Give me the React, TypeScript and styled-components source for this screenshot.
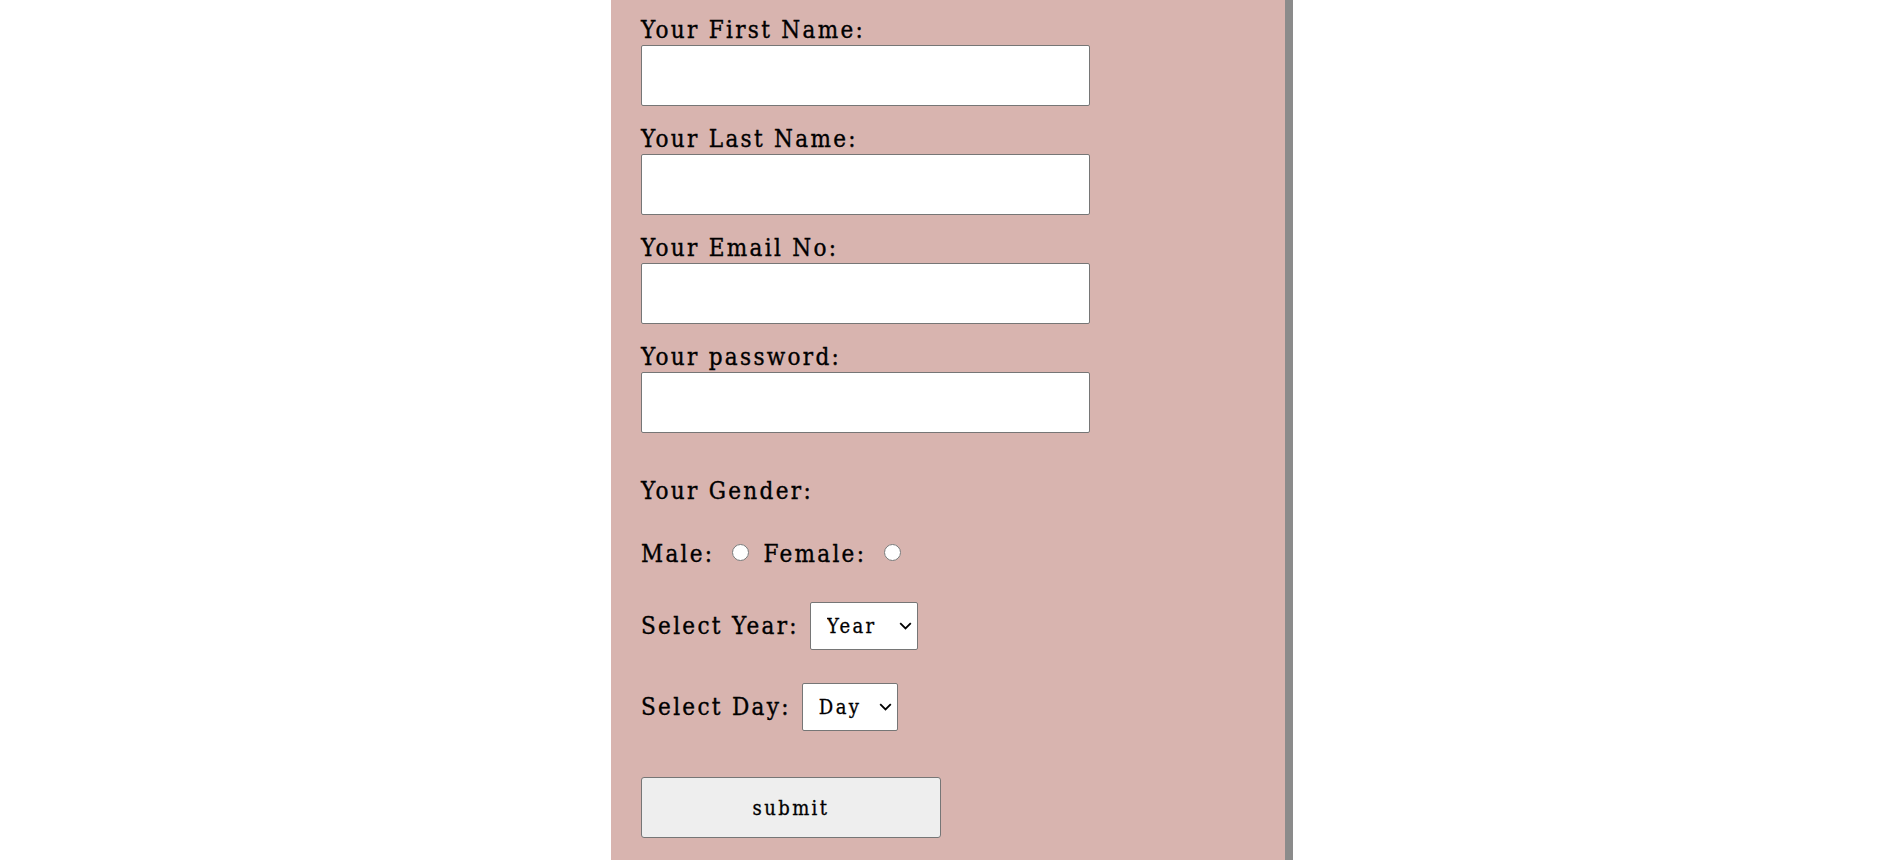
import React from "react";
import styled, { createGlobalStyle, css } from "styled-components";

const GlobalStyle = createGlobalStyle`
  html, body {
    margin: 0;
    padding: 0;
    background: #ffffff;
    font-family: "DejaVu Serif", "Liberation Serif", serif;
  }
`;

const slab = css`
  font-family: "DejaVu Serif Condensed", "DejaVu Serif", "Liberation Serif", serif;
  font-stretch: semi-condensed;
`;

const labelText = css`
  ${slab};
  font-size: 24px;
  line-height: 28px;
  letter-spacing: 2.3px;
  -webkit-text-stroke: 0.35px #000;
`;

const Page = styled.div`
  display: flex;
  min-height: 860px;
`;

const Panel = styled.form`
  margin-left: 611px;
  width: 682px;
  flex-shrink: 0;
  min-height: 860px;
  box-sizing: border-box;
  background: #d8b4af;
  border-right: 8px solid #8b8b8b;
  padding: 16px 30px 0 30px;
  display: flex;
  flex-direction: column;
  color: #000;
`;

const Field = styled.div<{ $last?: boolean }>`
  display: flex;
  flex-direction: column;
  margin-bottom: ${(p) => (p.$last ? 0 : 19)}px;
`;

const Label = styled.label`
  ${labelText};
  margin-bottom: 1px;
`;

const TextInput = styled.input`
  width: 449px;
  height: 61px;
  box-sizing: border-box;
  border: 1px solid #767676;
  border-radius: 2px;
  background: #fff;
  font-size: 20px;
  padding: 0 8px;
`;

const Heading = styled.div<{ $top: number }>`
  ${labelText};
  margin-top: ${(p) => p.$top}px;
`;

const Row = styled.div<{ $top: number }>`
  ${labelText};
  display: flex;
  align-items: center;
  margin-top: ${(p) => p.$top}px;
`;

const Radio = styled.input`
  width: 17px;
  height: 17px;
  margin: 0 14px 4px 18px;
`;

const SelectWrap = styled.div`
  position: relative;
  margin-left: 11px;
  display: flex;
`;

const Select = styled.select<{ $w: number }>`
  ${slab};
  appearance: none;
  -webkit-appearance: none;
  width: ${(p) => p.$w}px;
  height: 48px;
  box-sizing: border-box;
  font-size: 20px;
  letter-spacing: 2.4px;
  padding: 0 0 0 16px;
  border: 1px solid #767676;
  border-radius: 2px;
  background: #fff;
  color: #000;
  -webkit-text-stroke: 0.3px #000;
`;

const Chevron = styled.svg`
  position: absolute;
  right: 6px;
  top: 50%;
  margin-top: -4px;
  width: 13px;
  height: 8px;
  pointer-events: none;
`;

const Submit = styled.button`
  ${slab};
  margin-top: 46px;
  width: 300px;
  height: 61px;
  box-sizing: border-box;
  border: 1px solid #767676;
  border-radius: 3px;
  background: #eeeeee;
  font-size: 20px;
  letter-spacing: 2.4px;
  color: #000;
  align-self: flex-start;
  -webkit-text-stroke: 0.3px #000;
`;

const fields = [
  { id: "first", label: "Your First Name:", type: "text" },
  { id: "last", label: "Your Last Name:", type: "text" },
  { id: "email", label: "Your Email No:", type: "email" },
  { id: "pass", label: "Your password:", type: "password" },
];

function DropDown({ width, placeholder, options }: { width: number; placeholder: string; options: string[] }) {
  return (
    <SelectWrap>
      <Select $w={width} defaultValue="">
        <option value="">{placeholder}</option>
        {options.map((o) => (
          <option key={o}>{o}</option>
        ))}
      </Select>
      <Chevron viewBox="0 0 13 8">
        <path d="M1.2 1.2l5.3 5.3 5.3-5.3" fill="none" stroke="#000" strokeWidth="1.8" />
      </Chevron>
    </SelectWrap>
  );
}

export default function App() {
  return (
    <>
      <GlobalStyle />
      <Page>
        <Panel onSubmit={(e) => e.preventDefault()}>
          {fields.map((f, i) => (
            <Field key={f.id} $last={i === fields.length - 1}>
              <Label htmlFor={f.id}>{f.label}</Label>
              <TextInput id={f.id} type={f.type} />
            </Field>
          ))}
          <Heading $top={44}>Your Gender:</Heading>
          <Row $top={35}>
            <span>Male:</span>
            <Radio type="radio" name="gender" />
            <span>Female:</span>
            <Radio type="radio" name="gender" />
          </Row>
          <Row $top={34}>
            <span>Select Year:</span>
            <DropDown width={108} placeholder="Year" options={["2000", "2001", "2002"]} />
          </Row>
          <Row $top={33}>
            <span>Select Day:</span>
            <DropDown width={96} placeholder="Day" options={["1", "2", "3"]} />
          </Row>
          <Submit type="submit">submit</Submit>
        </Panel>
      </Page>
    </>
  );
}
